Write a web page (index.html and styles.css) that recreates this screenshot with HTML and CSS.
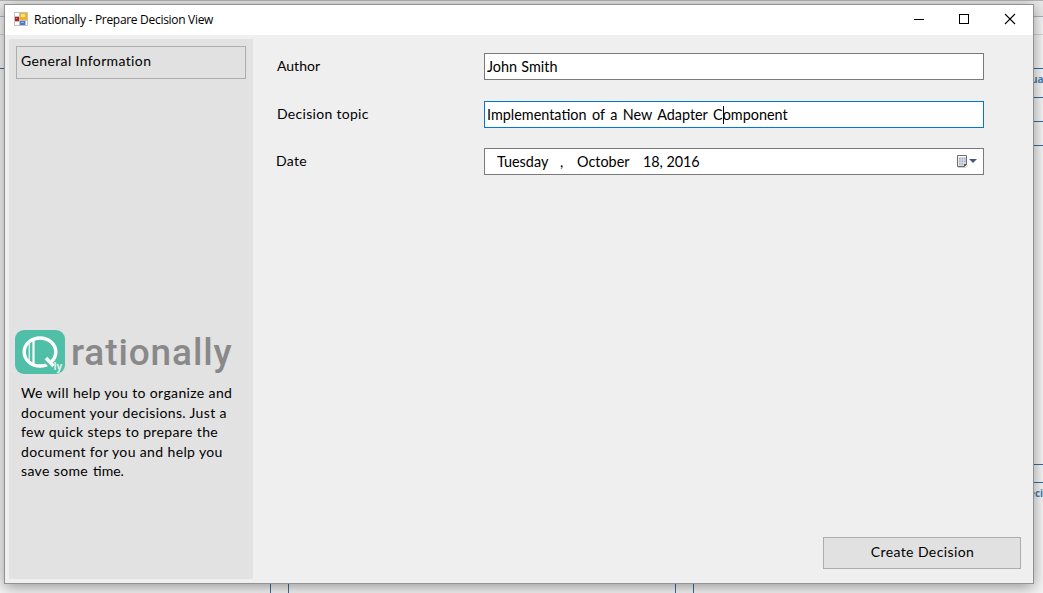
FILE: index.html
```html
<!DOCTYPE html>
<html lang="en">
<head>
<meta charset="utf-8">
<title>Rationally - Prepare Decision View</title>
<link rel="stylesheet" href="styles.css">
</head>
<body>
<svg class="backdrop" width="1043" height="593" viewBox="0 0 1043 593">
  <rect width="1043" height="593" fill="#f5f5f5"/>
  <rect width="1043" height="16" fill="#e9e9e9"/>
  <path d="M0 .5H1043" stroke="#b4b4b4"/>
  <path d="M0 16.5H1043" stroke="#a9b4c4"/>
  <path d="M0 34.5H1043" stroke="#d2d2d2"/>
  <path d="M0 68.5H1043M1000 97.5H1043M1000 121.5H1043M1000 145.5H1043M1000 464.5H1043M1000 482.5H1043M270.5 560V593M288.5 560V593M675.5 560V593M693.5 560V593" stroke="#356da5"/>
  <text x="1031" y="83" class="backdrop-text">ua</text>
  <text x="1029" y="497" class="backdrop-text">eci</text>
</svg>
<main class="window">
  <header class="titlebar">
    <svg class="app-icon" width="14" height="14" viewBox="0 0 14 14">
      <rect width="14" height="14" fill="#c2c2c2"/>
      <path d="M1 1h4v3H1zM1 10h4v3H1zM12 9h1v4h-1z" fill="#fff"/>
      <rect x="6" y="1" width="7" height="7" fill="#edb321"/><rect x="7" y="2" width="4" height="3" fill="#ffe078"/>
      <rect x="1" y="5" width="4" height="4" fill="#b4201c"/><rect x="2" y="6" width="1" height="1" fill="#ee8b75"/>
      <rect x="6" y="9" width="5" height="4" fill="#4679d4"/><rect x="7" y="10" width="3" height="1" fill="#8bb5f5"/>
    </svg>
    <h1 class="title">Rationally - Prepare Decision View</h1>
    <svg class="controls" width="104" height="12" viewBox="0 0 104 12" fill="none" stroke="#000">
      <path d="M0 6.5H10"/><rect x="45.500" y="1.500" width="9" height="9"/><path d="M91 1L101 11M101 1L91 11" stroke-width="1.100"/>
    </svg>
  </header>
  <div class="client">
    <aside class="sidebar">
      <button class="step">General Information</button>
      <div class="brand">
        <svg class="logo" width="50" height="44" viewBox="0 0 50 44">
          <rect width="50" height="44" rx="9" fill="#4fbfa7"/>
          <ellipse cx="25" cy="22" rx="15.800" ry="14" fill="none" stroke="#fff" stroke-width="3.400"/>
          <path d="M14.200 11V33" stroke="#fff" stroke-width="1.100"/><path d="M18.500 9V35" stroke="#fff" stroke-width="2.200"/>
          <path d="M31 30L38 37" stroke="#4fbfa7" stroke-width="6"/>
          <path d="M31 28L38.500 36" stroke="#fff" stroke-width="3.400"/>
          <text x="38.500" y="40" class="logo-text">ly</text>
        </svg>
        <span class="wordmark">rationally</span>
      </div>
      <p class="intro">We will help you to organize and<br>document your decisions. Just a<br>few quick steps to prepare the<br>document for you and help you<br>save some <span class="ligature">time.</span></p>
    </aside>
    <section class="form">
      <div class="row"><label class="label author">Author</label><div class="field"><span>John Smith</span></div></div>
      <div class="row"><label class="label">Decision topic</label><div class="field focused"><span>Implementation of a New Adapter C<i class="caret"></i>omponent</span></div></div>
      <div class="row"><label class="label date-label">Date</label><div class="field date"><span class="day">Tuesday</span><span class="comma">,</span><span class="month">October</span><span class="year">18, 2016</span>
        <svg class="calendar" width="22" height="14" viewBox="0 0 22 14">
          <path d="M2 12.500H9.500L12 10.500" fill="none" stroke="#cfcfcf"/>
          <path d="M1.500 .5h9v9l-2 2h-7z" fill="#fff" stroke="#756b68"/>
          <path d="M2.500 2h7.500v7h-2v2H2.500z" fill="#d3dae4"/>
          <path d="M3 3h1.500v1.500H3zM5.500 3H7v1.500H5.500zM8 3h1.500v1.500H8zM3 5.500h1.500V7H3zM5.500 5.500H7V7H5.500zM8 5.500h1.500V7H8zM3 8h1.500v1.500H3zM5.500 8H7v1.500H5.500z" fill="#a5b3c9"/>
          <path d="M8 12V9h3z" fill="#5e5552"/>
          <path d="M13 4h8l-4 4z" fill="#445780"/>
        </svg></div></div>
      <button class="create">Create Decision</button>
    </section>
  </div>
</main>
</body>
</html>
```

FILE: styles.css
```css
* { box-sizing: border-box; }
body {
  margin: 0;
  width: 1043px;
  height: 593px;
  overflow: hidden;
  padding: 4px;
  font-family: Lato, sans-serif;
  font-size: 14px;
  color: #000;
}
.backdrop { position: absolute; inset: 0; z-index: -1; }
.backdrop-text { font: bold 10px "Open Sans", sans-serif; fill: #4d7da7; }
.window {
  width: 1030px;
  height: 580px;
  border: 1px solid #929292;
  background: #efefef;
  box-shadow: 0 3px 14px rgba(0, 0, 0, .4);
  display: flex;
  flex-direction: column;
}
.titlebar {
  height: 30px;
  flex: none;
  background: #fff;
  display: flex;
  align-items: center;
  padding: 0 15px 0 9px;
}
.app-icon { margin-right: 6px; margin-top: -2px; }
.title { margin: -2px 0 0; font: 12px "Open Sans", sans-serif; letter-spacing: -.3px; }
.controls { margin-left: auto; margin-top: -2px; }
.client { flex: 1; display: flex; padding: 4px; }
.sidebar { width: 244px; height: 540px; background: #e2e2e2; padding: 7px 7px 0; }
button { font: inherit; color: inherit; border: 1px solid #adadad; background: #e1e1e1; padding: 0; }
.step { display: block; width: 230px; height: 33px; padding: 0 0 4px 4px; text-align: left; letter-spacing: .37px; }
.brand { display: flex; margin: 251px 0 0 -1px; height: 44px; }
.logo { flex: none; }
.logo-text { font: bold 10px "Open Sans", sans-serif; fill: #e0f5ef; }
.wordmark { font: 500 37px/46px Roboto, sans-serif; color: #898989; margin-left: 6px; letter-spacing: .9px; }
.intro { margin: 9px 0 0 5px; line-height: 19.500px; white-space: nowrap; letter-spacing: .37px; }
.ligature { letter-spacing: 0; padding-left: 1px; }
.form { flex: 1; display: flex; flex-direction: column; padding: 14px 45px 0 24px; }
.row { display: flex; height: 27px; margin-bottom: 20px; }
.row:first-child { margin-bottom: 21px; }
.label { width: 207px; line-height: 26px; letter-spacing: .3px; }
.author { letter-spacing: 0; }
.date-label { text-indent: -1px; }
.field { width: 500px; height: 27px; border: 1px solid #7a7a7a; background: #fff; font-size: 14.400px; word-spacing: .6px; line-height: 25px; padding-left: 2px; white-space: nowrap; }
.focused { border-color: #0078d7; word-spacing: 1.800px; }
.caret { display: inline-block; width: 1px; height: 18px; margin-right: -1px; background: #000; vertical-align: -4px; }
.date { display: flex; padding-left: 12px; line-height: 26px; word-spacing: 0; }
.day { width: 63px; }
.comma { width: 17px; }
.month { width: 66px; }
.year { letter-spacing: -.15px; word-spacing: .5px; }
.calendar { margin: 6px 5px 0 auto; }
.create { width: 198px; height: 32px; margin: auto -37px 10px auto; letter-spacing: .4px; padding: 0 0 4px 1px; }
```
